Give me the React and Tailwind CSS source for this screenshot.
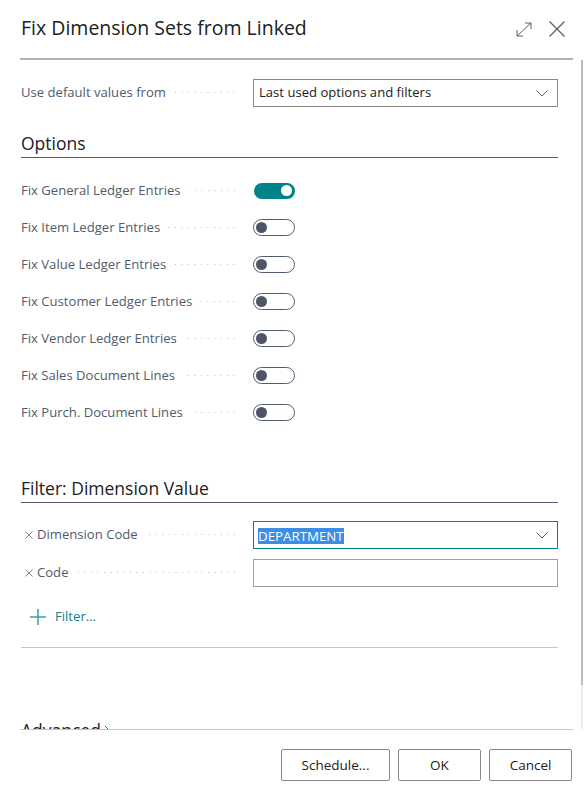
import React from "react";

function Dots() {
  return (
    <div className="flex-1 h-[1px] ml-[8px] bg-[linear-gradient(to_right,#b8b8b8_1px,transparent_1px)] bg-[length:6.5px_1px] bg-repeat-x bg-right" />
  );
}

function Chevron() {
  return (
    <svg width="12" height="7" viewBox="0 0 12 7" className="shrink-0">
      <path d="M0.5 0.5 L6 6 L11.5 0.5" fill="none" stroke="#605e5c" strokeWidth="1" />
    </svg>
  );
}

function Toggle({ on }) {
  if (on) {
    return (
      <div className="w-[41px] h-[16px] ml-[1px] rounded-full bg-[#008489] flex items-center justify-end pr-[3px]">
        <div className="w-[11px] h-[11px] rounded-full bg-white" />
      </div>
    );
  }
  return (
    <div className="w-[42px] h-[17px] rounded-full border border-[#505c6d] flex items-center pl-[2px]">
      <div className="w-[11px] h-[11px] rounded-full bg-[#4d5566]" />
    </div>
  );
}

function Label({ text, x }) {
  return (
    <div className="w-[219px] flex items-center shrink-0">
      {x ? (
        <div className="flex items-center">
          <svg width="8" height="8" viewBox="0 0 8 8" className="ml-[4px] mr-[4px]">
            <path d="M0.5 0.5 L7.5 7.5 M7.5 0.5 L0.5 7.5" stroke="#8a8886" strokeWidth="1" />
          </svg>
          <span className="text-[13.1px] text-[#505c6d] whitespace-nowrap">{text}</span>
        </div>
      ) : (
        <span className="text-[13.1px] text-[#505c6d] whitespace-nowrap">{text}</span>
      )}
      <Dots />
    </div>
  );
}

function ToggleRow({ text, on }) {
  return (
    <div className="h-[37px] flex items-center">
      <Label text={text} />
      <div className="ml-[13px]">
        <Toggle on={on} />
      </div>
    </div>
  );
}

function Heading({ children }) {
  return (
    <div className="h-[30px] border-b border-[#505c6d] pt-[3px]">
      <div className="leading-[24px] text-[17.5px] text-[#212121]">{children}</div>
    </div>
  );
}

export default function App() {
  const toggles = [
    ["Fix General Ledger Entries", true],
    ["Fix Item Ledger Entries", false],
    ["Fix Value Ledger Entries", false],
    ["Fix Customer Ledger Entries", false],
    ["Fix Vendor Ledger Entries", false],
    ["Fix Sales Document Lines", false],
    ["Fix Purch. Document Lines", false],
  ];
  return (
    <div className="w-[584px] h-[793px] bg-white flex flex-col overflow-hidden font-['Open_Sans',sans-serif]">
      {/* Header */}
      <div className="h-[58px] flex items-center pl-[21px] pr-[19px] shrink-0">
        <div className="flex-1 text-[19.5px] text-[#212121] leading-[26px] pb-[2px]">
          Fix Dimension Sets from Linked
        </div>
        <svg width="16" height="15" viewBox="0 0 16 15" className="mr-[17px]">
          <path
            d="M1 14 L15 1 M15 1 L9 1 M15 1 L15 7 M1 14 L1 8 M1 14 L7 14"
            fill="none"
            stroke="#605e5c"
            strokeWidth="1"
          />
        </svg>
        <svg width="16" height="16" viewBox="0 0 16 16">
          <path d="M0.5 0.5 L15.5 15.5 M15.5 0.5 L0.5 15.5" fill="none" stroke="#605e5c" strokeWidth="1.3" />
        </svg>
      </div>
      <div className="h-[2px] ml-[20px] w-[553px] bg-[#adb2ba] shrink-0" />

      {/* Body */}
      <div className="flex h-[669px] shrink-0">
        <div className="flex-1 overflow-hidden pl-[21px] pr-[23px]">
          {/* Use default values */}
          <div className="mt-[19px] h-[28px] flex items-center">
            <Label text="Use default values from" />
            <div className="ml-[13px] flex-1 h-[28px] border border-[#8a8886] flex items-center pl-[5px] pr-[9px]">
              <span className="flex-1 text-[13.1px] text-[#212121]">Last used options and filters</span>
              <Chevron />
            </div>
          </div>

          <div className="mt-[21px]">
            <Heading>Options</Heading>
          </div>

          <div className="mt-[14px]">
            {toggles.map(([t, on]) => (
              <ToggleRow key={t} text={t} on={on} />
            ))}
          </div>

          <div className="mt-[42px]">
            <Heading>Filter: Dimension Value</Heading>
          </div>

          <div className="mt-[18px] h-[28px] flex items-center">
            <Label text="Dimension Code" x />
            <div className="ml-[13px] flex-1 h-[28px] border border-[#008489] flex items-center pl-[4px] pr-[9px]">
              <div className="flex-1">
                <span className="bg-[#3a8ee6] text-white text-[13.3px] leading-[16px] inline-block">DEPARTMENT</span>
              </div>
              <Chevron />
            </div>
          </div>

          <div className="mt-[10px] h-[28px] flex items-center">
            <Label text="Code" x />
            <div className="ml-[13px] flex-1 h-[28px] border border-[#a19f9d]" />
          </div>

          <div className="mt-[16px] h-[28px] flex items-center pl-[9px]">
            <svg width="16" height="16" viewBox="0 0 16 16">
              <path d="M8 0 L8 16 M0 8 L16 8" stroke="#3a9fa3" strokeWidth="1.5" />
            </svg>
            <span className="ml-[9px] text-[13.1px] text-[#0f7f84]">Filter...</span>
          </div>

          <div className="mt-[16px] h-[1px] bg-[#c8c6c4]" />

          <div className="mt-[70px] flex items-center leading-[24px] text-[17.5px] text-[#212121]">
            Advanced
            <svg width="6" height="10" viewBox="0 0 6 10" className="ml-[3px]">
              <path d="M1 1 L5 5 L1 9" fill="none" stroke="#605e5c" strokeWidth="1" />
            </svg>
          </div>
        </div>
        {/* scrollbar */}
        <div className="w-[2px] mr-[1px] flex flex-col">
          <div className="h-[625px] bg-[#bdbdbd]" />
          <div className="flex-1 bg-[#ededed]" />
        </div>
      </div>

      {/* Footer */}
      <div className="h-[1px] ml-[20px] w-[553px] bg-[#c8c6c4] shrink-0" />
      <div className="flex justify-end gap-[8px] pr-[12px] pt-[19px]">
        <button className="w-[109px] h-[32px] border border-[#8a8886] rounded-[2px] bg-white text-[13.5px] text-[#212121]">
          Schedule...
        </button>
        <button className="w-[83px] h-[32px] border border-[#8a8886] rounded-[2px] bg-white text-[13.5px] text-[#212121]">
          OK
        </button>
        <button className="w-[83px] h-[32px] border border-[#8a8886] rounded-[2px] bg-white text-[13.5px] text-[#212121]">
          Cancel
        </button>
      </div>
    </div>
  );
}
